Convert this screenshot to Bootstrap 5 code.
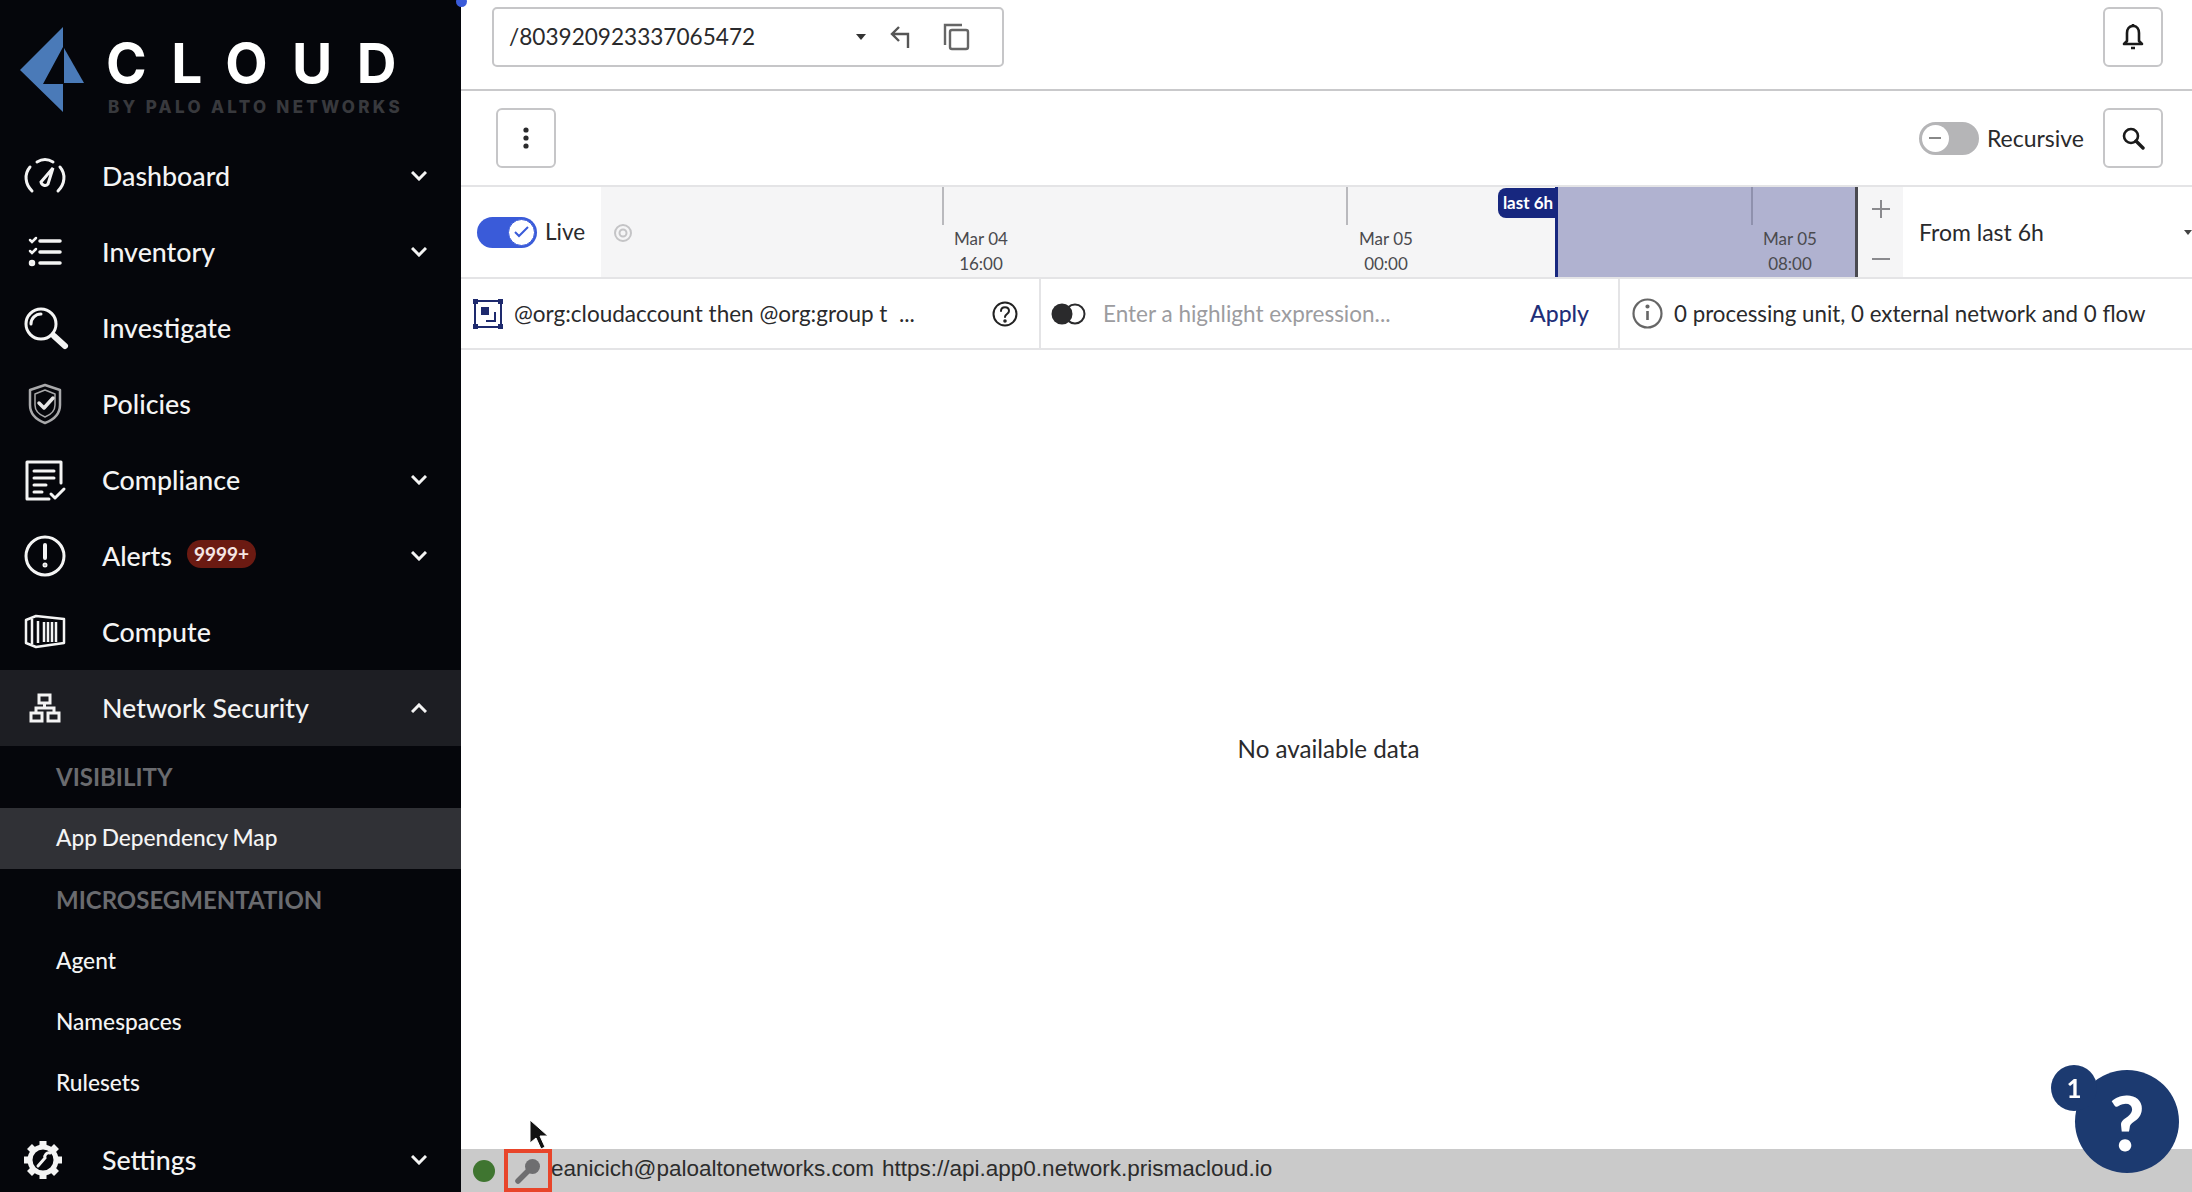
<!DOCTYPE html>
<html lang="en">
<head>
    <meta charset="UTF-8">
    <meta name="viewport" content="width=device-width, initial-scale=1.0">
    <title>Prisma Cloud - App Dependency Map</title>
    <link href="https://cdn.jsdelivr.net/npm/bootstrap@5.3.0/dist/css/bootstrap.min.css" rel="stylesheet">
    <style>
        body {
            font-family: Lato, "Liberation Sans", sans-serif;
            color: #2a2a2c;
            overflow: hidden;
            background: #fff;
        }
        .side {
            width: 461px;
            background: #05060b;
            flex-shrink: 0;
            overflow: hidden;
        }
        .logo-box { height: 138px; padding-left: 20px; flex-shrink: 0; }
        .logo-name {
            font-family: Inter, sans-serif;
            font-size: 55px;
            line-height: 56px;
            font-weight: 700;
            letter-spacing: 24.5px;
            color: #fff;
        }
        .logo-by {
            font-family: Inter, sans-serif;
            font-size: 17px;
            line-height: 18px;
            font-weight: 800;
            letter-spacing: 3.3px;
            color: #38393d;
            margin-top: 7px;
            margin-left: 2px;
            white-space: nowrap;
        }
        .corner-dot { left: 456px; top: -4px; width: 11px; height: 11px; border-radius: 50%; background: #3a5bd9; position: fixed; }
        .side-nav { flex-shrink: 0; }
        .side-link {
            height: 76px;
            padding: 0 34px 0 18px;
            color: #f4f4f4;
            font-size: 26.8px;
            font-weight: 500;
            gap: 30px;
        }
        .side-link:hover { color: #fff; }
        .side-link.open { background: #1d1e23; }
        .side-ico { width: 54px; height: 54px; flex-shrink: 0; }
        .count-pill {
            background: #6b1a12;
            color: #f6e6e4;
            font-size: 19px;
            font-weight: 700;
            border-radius: 14px;
            padding: 2px 7px;
            margin-left: 15px;
            margin-top: -4px;
            line-height: 24px;
        }
        .side-head {
            height: 62px;
            padding-left: 56px;
            color: #6a6b6f;
            font-size: 24px;
            font-weight: 700;
        }
        .side-sub {
            height: 61px;
            padding-left: 56px;
            color: #f4f4f4;
            font-size: 22.7px;
            font-weight: 500;
            word-spacing: -1px;
        }
        .side-sub.on { background: #303136; }
        .side-last { margin-top: 8px; }

        .top-row { height: 91px; border-bottom: 2px solid #c9c9cb; padding: 7px 29px 0 31px; }
        .path-box {
            width: 512px;
            height: 60px;
            border: 2px solid #c6c6c8;
            border-radius: 5px;
            padding: 0 15px;
            font-size: 22.6px;
        }
        .square-btn {
            width: 60px;
            height: 60px;
            border: 2px solid #c6c6c8;
            border-radius: 6px;
            background: #fff;
            padding: 0;
        }
        .tool-row { height: 96px; padding: 0 29px 0 35px; border-bottom: 2px solid #e4e4e6; }
        .rec-text { font-size: 23px; margin-left: 8px; margin-right: 19px; }
        .switch-off { width: 60px; height: 33px; border-radius: 17px; background: #b5b5b7; border: 3px solid #b5b5b7; padding: 0; }
        .switch-knob { width: 27px; height: 27px; border-radius: 50%; background: #fff; }
        .time-row { height: 92px; border-bottom: 2px solid #e4e4e6; }
        .live-cell { width: 140px; padding-left: 16px; font-size: 22.5px; gap: 8px; flex-shrink: 0; }
        .switch-on { width: 60px; height: 31px; border-radius: 16px; background: #3a5bd9; padding: 2px; }
        .switch-on .switch-knob { width: 27px; height: 27px; border: 1px solid #3a5bd9; }
        .time-track { width: 1257px; background: #f5f5f6; position: relative; flex-shrink: 0; }
        .time-pick { left: 954px; right: 2px; top: 0; bottom: 0; background: #b0b2d0; border-left: 3px solid #17277f; position: absolute; }
        .time-end { right: 0; top: 0; bottom: 0; width: 3px; background: #4a4a50; position: absolute; }
        .time-tick { top: 0; width: 2px; height: 38px; background: #b9b9bd; position: absolute; }
        .tick-on { background: #8f91ad; }
        .time-label { top: 39px; width: 80px; text-align: center; font-size: 17px; line-height: 25px; color: #4a4a4e; position: absolute; }
        .time-flag {
            left: 897px;
            top: 1px;
            width: 60px;
            height: 30px;
            background: #17277f;
            color: #fff;
            border-radius: 8px 0 0 8px;
            font-size: 17px;
            font-weight: 700;
            line-height: 30px;
            text-align: center;
            position: absolute;
        }
        .zoom-col { width: 45px; background: #f5f5f6; color: #8a8a8e; flex-shrink: 0; padding: 12px 0; }
        .range-cell { font-size: 23px; padding-left: 16px; color: #2a2a2c; }
        .query-row { height: 71px; border-bottom: 2px solid #e4e4e6; font-size: 22.5px; }
        .q-left { width: 580px; padding: 0 21px 0 11px; border-right: 2px solid #e4e4e6; flex-shrink: 0; }
        .q-mid { width: 579px; padding: 0 29px 0 10px; border-right: 2px solid #e4e4e6; flex-shrink: 0; }
        .q-hint { color: #9c9c9f; font-size: 22.5px; margin-left: 17px; }
        .q-apply { color: #1f2f78; font-size: 23px; font-weight: 500; text-decoration: none; }
        .q-info { padding-left: 12px; font-size: 22.3px; gap: 11px; white-space: nowrap; }
        .empty-note { font-size: 24.2px; padding-left: 4px; }
        .status-strip { height: 43px; background: #cacaca; padding-left: 12px; font-family: "Liberation Sans", sans-serif; font-size: 22.5px; position: relative; color: #2c2c2c; }
        .status-text { margin-top: -4px; }
        .status-dot { width: 22px; height: 22px; border-radius: 50%; background: #3f7530; }
        .key-box { width: 48px; height: 43px; border: 4px solid #e8452a; margin-left: 9px; margin-right: -1px; }
        .help-wrap { right: 13px; bottom: 19px; width: 128px; height: 108px; position: fixed; }
        .help-big { left: 24px; top: 5px; width: 104px; height: 103px; border-radius: 50%; background: #1c3a70; color: #fff; font-size: 76px; font-weight: 900; line-height: 103px; text-align: center; position: absolute; }
        .help-small { left: 0; top: 0; width: 46px; height: 46px; border-radius: 50%; background: #1c3a70; color: #fff; font-size: 26px; font-weight: 700; line-height: 46px; text-align: center; position: absolute; }
        .pointer-mark { left: 529px; top: 1119px; position: fixed; }
    </style>
</head>
<body>
<div class="d-flex vh-100">
    <div class="side d-flex flex-column">
        <div class="logo-box d-flex align-items-start">
            <svg width="70" height="92" viewBox="0 0 70 92" class="mt-4 flex-shrink-0">
                <polygon points="43,3 0,46 43,88 43,60 23,60 43,23" fill="#4a7ab8"/>
                <polygon points="44,24 64,59 44,59" fill="#4a7ab8"/>
            </svg>
            <div class="ms-3" style="padding-top:35px">
                <div class="logo-name">CLOUD</div>
                <div class="logo-by">BY PALO ALTO NETWORKS</div>
            </div>
        </div>
        <nav class="nav side-nav flex-column flex-nowrap">
            <a class="nav-link side-link d-flex align-items-center" href="#">
                <svg class="side-ico" viewBox="0 0 54 54" fill="none" stroke="currentColor" stroke-width="3" stroke-linecap="round"><path d="M14 42c-7-7-8-17-2-24M19 13c5-3 11-3 16 0M42 18c6 7 5 17-2 24"/><path d="M23 33l12-14-5 16a4 4 0 0 1-7-2z"/></svg>
                <span>Dashboard</span>
                <svg class="ms-auto" width="16" height="10" viewBox="0 0 16 10" fill="none" stroke="currentColor" stroke-width="3"><path d="M1 1l7 7 7-7"/></svg>
            </a>
            <a class="nav-link side-link d-flex align-items-center" href="#">
                <svg class="side-ico" viewBox="0 0 54 54" fill="none" stroke="currentColor" stroke-width="3.5" stroke-linecap="round"><path d="M22 16h20M22 27h20M22 38h20"/><path d="M12 15l2 2 4-4M12 26l2 2 4-4" stroke-width="2.5"/><circle cx="14" cy="38" r="1.5"/></svg>
                <span>Inventory</span>
                <svg class="ms-auto" width="16" height="10" viewBox="0 0 16 10" fill="none" stroke="currentColor" stroke-width="3"><path d="M1 1l7 7 7-7"/></svg>
            </a>
            <a class="nav-link side-link d-flex align-items-center" href="#">
                <svg class="side-ico" viewBox="0 0 54 54" fill="none" stroke="currentColor" stroke-width="3" stroke-linecap="round"><circle cx="23" cy="23" r="15"/><path d="M13 23a10 10 0 0 1 10-10"/><path d="M36 35l11 10" stroke-width="6"/></svg>
                <span>Investigate</span>
            </a>
            <a class="nav-link side-link d-flex align-items-center" href="#">
                <svg class="side-ico" viewBox="0 0 54 54" fill="none" stroke="#a9a9ab" stroke-width="2.5" stroke-linejoin="round" stroke-linecap="round"><path d="M27 8l15 5v15c0 9-7 15-15 18-8-3-15-9-15-18V13z"/><path d="M27 13l10 4v11c0 6-5 10-10 12-5-2-10-6-10-12V17z" stroke-width="1.5"/><path d="M21 26l5 5 9-10" stroke-width="3.5" stroke="#e6e6e6"/></svg>
                <span>Policies</span>
            </a>
            <a class="nav-link side-link d-flex align-items-center" href="#">
                <svg class="side-ico" viewBox="0 0 54 54" fill="none" stroke="currentColor" stroke-width="3" stroke-linecap="round" stroke-linejoin="round"><path d="M43 30V9H9v37h22"/><path d="M16 18h20M16 25h20M16 32h12M16 39h8"/><path d="M33 41l4 4 9-9"/></svg>
                <span>Compliance</span>
                <svg class="ms-auto" width="16" height="10" viewBox="0 0 16 10" fill="none" stroke="currentColor" stroke-width="3"><path d="M1 1l7 7 7-7"/></svg>
            </a>
            <a class="nav-link side-link d-flex align-items-center" href="#">
                <svg class="side-ico" viewBox="0 0 54 54" fill="none" stroke="currentColor" stroke-width="3" stroke-linecap="round"><circle cx="27" cy="27" r="19"/><path d="M27 16v13" stroke-width="4"/><circle cx="27" cy="36" r="1"/></svg>
                <span class="d-flex align-items-center"><span>Alerts</span><span class="count-pill">9999+</span></span>
                <svg class="ms-auto" width="16" height="10" viewBox="0 0 16 10" fill="none" stroke="currentColor" stroke-width="3"><path d="M1 1l7 7 7-7"/></svg>
            </a>
            <a class="nav-link side-link d-flex align-items-center" href="#">
                <svg class="side-ico" viewBox="0 0 54 54" fill="none" stroke="currentColor" stroke-width="2.5" stroke-linejoin="round"><path d="M8 15l10-4 28 3v24l-28 4-10-4z"/><path d="M14 14v25M20 16v22M26 17v20M30 17v20M34 17v20M38 17v20"/></svg>
                <span>Compute</span>
            </a>
            <a class="nav-link side-link open d-flex align-items-center" href="#">
                <svg class="side-ico" viewBox="0 0 54 54" fill="none" stroke="currentColor" stroke-width="3"><rect x="21" y="14" width="11" height="8"/><rect x="13" y="32" width="11" height="8"/><rect x="30" y="32" width="11" height="8"/><path d="M26.500 22v5M18 32v-5h18v5"/></svg>
                <span>Network Security</span>
                <svg class="ms-auto" width="16" height="10" viewBox="0 0 16 10" fill="none" stroke="currentColor" stroke-width="3"><path d="M1 9l7-7 7 7"/></svg>
            </a>
            <div class="side-head d-flex align-items-center">VISIBILITY</div>
            <a class="nav-link side-sub on d-flex align-items-center" href="#">App Dependency Map</a>
            <div class="side-head d-flex align-items-center">MICROSEGMENTATION</div>
            <a class="nav-link side-sub d-flex align-items-center" href="#">Agent</a>
            <a class="nav-link side-sub d-flex align-items-center" href="#">Namespaces</a>
            <a class="nav-link side-sub d-flex align-items-center" href="#">Rulesets</a>
            <a class="nav-link side-link side-last d-flex align-items-center" href="#">
                <svg class="side-ico" viewBox="0 0 54 54" fill="none" stroke="currentColor" stroke-width="5" stroke-linecap="butt"><circle cx="25" cy="27" r="13"/><path d="M25 8v5M25 41v5M6 27h5M39 27h5M11.500 13.500l4 4M34.500 36.500l4 4M11.500 40.500l4-4M34.500 17.500l4-4" stroke-width="7"/><path d="M20 33l7-8a4 4 0 0 1 5-5" stroke-width="3" stroke-linecap="round"/></svg>
                <span>Settings</span>
                <svg class="ms-auto" width="16" height="10" viewBox="0 0 16 10" fill="none" stroke="currentColor" stroke-width="3"><path d="M1 1l7 7 7-7"/></svg>
            </a>
        </nav>
    </div>

    <div class="flex-grow-1 d-flex flex-column" style="min-width:0">
        <div class="top-row d-flex align-items-start justify-content-between">
            <div class="path-box d-flex align-items-center">
                <span>/803920923337065472</span>
                <span class="ms-auto d-flex align-items-center">
                    <svg width="10" height="6" viewBox="0 0 10 6"><path d="M0 0h10L5 6z" fill="#333"/></svg>
                    <svg style="margin-left:24px" width="22" height="24" viewBox="0 0 22 24" fill="none" stroke="#555" stroke-width="2.4"><path d="M9 2L2 9l7 7M2 9h16v14"/></svg>
                    <svg style="margin-left:30px;margin-right:17px" width="28" height="28" viewBox="0 0 28 28" fill="none" stroke="#666" stroke-width="2.4"><path d="M20 2H3v20"/><rect x="8" y="7" width="18" height="19" rx="2"/></svg>
                </span>
            </div>
            <button class="square-btn d-flex align-items-center justify-content-center" type="button">
                <svg width="22" height="28" viewBox="0 0 22 28" fill="none" stroke="#1a1a1a" stroke-width="2.6" stroke-linejoin="round"><path d="M11 3c-4 0-6 3-6 7v8l-3 3h18l-3-3v-8c0-4-2-7-6-7z"/><path d="M11 1v2M9 25h4"/></svg>
            </button>
        </div>
        <div class="tool-row d-flex align-items-center justify-content-between">
            <button class="square-btn d-flex align-items-center justify-content-center" type="button">
                <svg width="6" height="24" viewBox="0 0 6 24" fill="#2a2a2c"><circle cx="3" cy="4" r="2.6"/><circle cx="3" cy="12" r="2.6"/><circle cx="3" cy="20" r="2.6"/></svg>
            </button>
            <div class="d-flex align-items-center">
                <div class="switch-off d-flex align-items-center">
                    <span class="switch-knob d-flex align-items-center justify-content-center"><svg width="12" height="2"><rect width="12" height="2" fill="#888"/></svg></span>
                </div>
                <span class="rec-text">Recursive</span>
                <button class="square-btn d-flex align-items-center justify-content-center" type="button">
                    <svg width="24" height="24" viewBox="0 0 24 24" fill="none" stroke="#1a1a1a" stroke-width="2.6" stroke-linecap="round"><circle cx="10" cy="10" r="7"/><path d="M15 15l7 7" stroke-width="3.4"/></svg>
                </button>
            </div>
        </div>
        <div class="time-row d-flex">
            <div class="live-cell d-flex align-items-center">
                <div class="switch-on d-flex justify-content-end">
                    <span class="switch-knob d-flex align-items-center justify-content-center">
                        <svg width="15" height="12" viewBox="0 0 15 12" fill="none" stroke="#3a5bd9" stroke-width="2"><path d="M1 6l4 4 9-9"/></svg>
                    </span>
                </div>
                <span>Live</span>
            </div>
            <div class="time-track">
                <svg class="position-absolute" style="left:12px;top:36px" width="20" height="20" viewBox="0 0 20 20" fill="none" stroke="#c4c4c6" stroke-width="2"><circle cx="10" cy="10" r="8"/><circle cx="10" cy="10" r="3.5"/></svg>
                <div class="time-pick"></div>
                <div class="time-end"></div>
                <div class="time-tick" style="left:341px"></div>
                <div class="time-tick" style="left:745px"></div>
                <div class="time-tick tick-on" style="left:1150px"></div>
                <div class="time-label" style="left:340px">Mar 04<br>16:00</div>
                <div class="time-label" style="left:745px">Mar 05<br>00:00</div>
                <div class="time-label" style="left:1149px">Mar 05<br>08:00</div>
                <div class="time-flag">last 6h</div>
            </div>
            <div class="zoom-col d-flex flex-column align-items-center justify-content-between">
                <svg width="20" height="20" viewBox="0 0 20 20" stroke="#8a8a8e" stroke-width="2"><path d="M10 1v18M1 10h18"/></svg>
                <svg width="20" height="20" viewBox="0 0 20 20" stroke="#8a8a8e" stroke-width="2"><path d="M1 14h18"/></svg>
            </div>
            <div class="range-cell flex-grow-1 d-flex align-items-center justify-content-between">
                <span>From last 6h</span>
                <svg width="8" height="5" viewBox="0 0 10 6"><path d="M0 0h10L5 6z" fill="#444"/></svg>
            </div>
        </div>
        <div class="query-row d-flex">
            <div class="q-left d-flex align-items-center">
                <svg width="32" height="32" viewBox="0 0 32 32" fill="none" class="flex-shrink-0"><rect x="3" y="3" width="26" height="26" stroke="#1e2a6e" stroke-width="2"/><rect x="1" y="1" width="5" height="5" fill="#1e2a6e"/><rect x="26" y="1" width="5" height="5" fill="#1e2a6e"/><rect x="1" y="26" width="5" height="5" fill="#1e2a6e"/><rect x="26" y="26" width="5" height="5" fill="#1e2a6e"/><rect x="9" y="9" width="8" height="8" fill="#1e2a6e"/><path d="M14 23h9v-9" stroke="#1e2a6e" stroke-width="2"/></svg>
                <span class="text-nowrap" style="margin-left:10px">@org:cloudaccount then @org:group t &nbsp;...</span>
                <svg class="ms-auto" width="26" height="26" viewBox="0 0 26 26" fill="none" stroke="#222" stroke-width="2"><circle cx="13" cy="13" r="11.5"/><path d="M9 10c0-5 8-5 8 0 0 3-4 3-4 6" stroke-linecap="round"/><circle cx="13" cy="20" r=".8"/></svg>
            </div>
            <div class="q-mid d-flex align-items-center">
                <svg width="35" height="22" viewBox="0 0 35 22" class="flex-shrink-0"><circle cx="24" cy="11" r="9.500" fill="#fff" stroke="#2a2a2c" stroke-width="2"/><circle cx="11" cy="11" r="10.500" fill="#2a2a2c"/></svg>
                <span class="q-hint text-nowrap">Enter a highlight expression...</span>
                <a class="q-apply ms-auto" href="#">Apply</a>
            </div>
            <div class="q-info d-flex align-items-center">
                <svg width="31" height="31" viewBox="0 0 31 31" fill="none" stroke="#666" stroke-width="2.2" class="flex-shrink-0"><circle cx="15.5" cy="15.5" r="14"/><path d="M15.5 13v9" stroke-width="2.6"/><circle cx="15.5" cy="8.5" r="1"/></svg>
                <span>0 processing unit, 0 external network and 0 flow</span>
            </div>
        </div>
        <div class="flex-grow-1 d-flex align-items-center justify-content-center">
            <span class="empty-note">No available data</span>
        </div>
        <div class="status-strip d-flex align-items-center">
            <span class="status-dot"></span>
            <span class="key-box d-flex align-items-center justify-content-center">
                <svg width="28" height="28" viewBox="0 0 28 28" fill="#6e6e70" stroke="#6e6e70"><circle cx="18.500" cy="9.500" r="7.500" stroke="none"/><path d="M15 13L4 24" stroke-width="5.500" stroke-linecap="round"/></svg>
            </span>
            <span class="status-text">eanicich@paloaltonetworks.com</span>
            <span class="status-text ms-2">https://api.app0.network.prismacloud.io</span>
        </div>
    </div>
</div>
<div class="corner-dot"></div>
<svg class="pointer-mark" width="20" height="32" viewBox="0 0 20 32"><path d="M1 1v23l6-5 5 11 4-2-5-11h8z" fill="#111" stroke="#fff" stroke-width="1"/></svg>
<div class="help-wrap">
    <div class="help-big">?</div>
    <div class="help-small">1</div>
</div>
</body>
</html>
